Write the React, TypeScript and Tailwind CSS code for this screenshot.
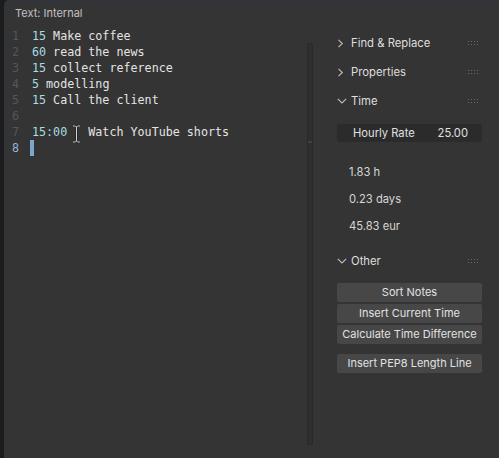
import React from 'react';

type Line = { num: string; head: string; rest: string };

const lines: Line[] = [
  { num: '1', head: '15', rest: ' Make coffee' },
  { num: '2', head: '60', rest: ' read the news' },
  { num: '3', head: '15', rest: ' collect reference' },
  { num: '4', head: '5', rest: ' modelling' },
  { num: '5', head: '15', rest: ' Call the client' },
  { num: '6', head: '', rest: '' },
  { num: '7', head: '15:00', rest: '   Watch YouTube shorts' },
];

function ChevronRight() {
  return (
    <svg width="7" height="9" viewBox="0 0 7 9" className="shrink-0">
      <path d="M1.5 0.8 L5.3 4.5 L1.5 8.2" fill="none" stroke="#bdbdbd" strokeWidth="1.1" />
    </svg>
  );
}

function ChevronDown() {
  return (
    <svg width="10" height="6" viewBox="0 0 10 6" className="shrink-0">
      <path d="M0.8 0.8 L5 5 L9.2 0.8" fill="none" stroke="#bdbdbd" strokeWidth="1.1" />
    </svg>
  );
}

function Grip() {
  return (
    <svg width="11" height="5" viewBox="0 0 11 5" className="ml-auto mr-[3px]">
      {[0, 3, 6, 9].map((x) => (
        <g key={x}>
          <rect x={x} y={0} width="1" height="1" fill="#6a6a6a" />
          <rect x={x} y={3} width="1" height="1" fill="#6a6a6a" />
        </g>
      ))}
    </svg>
  );
}

function PanelHeader({ title, open }: { title: string; open?: boolean }) {
  return (
    <div className="h-[20px] flex items-center pr-[17px]">
      <div className="w-[14px] flex items-center">{open ? <ChevronDown /> : <ChevronRight />}</div>
      <span className="text-[11.3px] text-[#dedede]">{title}</span>
      <Grip />
    </div>
  );
}

function Btn({ label }: { label: string }) {
  return (
    <div className="h-[19px] w-[145px] bg-[#474747] rounded-[2px] flex items-center justify-center text-[11px] text-[#e2e2e2]">
      {label}
    </div>
  );
}

export default function App() {
  return (
    <div className="w-[499px] h-[458px] bg-[#1c1c1c] flex font-['Inter',sans-serif] overflow-hidden">
      <div className="w-[4px] shrink-0" />
      <div className="flex-1 flex bg-[#343434] rounded-tl-[5px] border-l border-t border-[#2c3443]">
        {/* Editor */}
        <div className="w-[302px] shrink-0 flex flex-col">
          <div className="h-[24px] pl-[10px] flex items-center text-[11px] text-[#c2c2c2]">Text: Internal</div>
          <div className="mt-[3px] font-['DejaVu_Sans_Mono',monospace] text-[11.7px]">
            {lines.map((l) => (
              <div key={l.num} className="relative h-[16px] leading-[16px] flex whitespace-pre">
                <span className="w-[27px] pl-[7px] text-[#565656]">{l.num}</span>
                <span className="text-[#a9dbe3]">{l.head}</span>
                <span className="text-[#e4e4e4]">{l.rest}</span>
                {l.num === '7' && (
                  <svg width="9" height="18" viewBox="0 0 9 18" className="absolute left-[67px] top-[1px]">
                    <path d="M1 1 H3.5 L4.5 2 L5.5 1 H8 M4.5 2 V16 M1 17 H3.5 L4.5 16 L5.5 17 H8" fill="none" stroke="#1e1e1e" strokeWidth="2" />
                    <path d="M1 1 H3.5 L4.5 2 L5.5 1 H8 M4.5 2 V16 M1 17 H3.5 L4.5 16 L5.5 17 H8" fill="none" stroke="#cfcfcf" strokeWidth="1" />
                  </svg>
                )}
              </div>
            ))}
            <div className="h-[16px] leading-[16px] flex">
              <span className="w-[25px] pl-[7px] text-[#8fb6da]">8</span>
              <span className="w-[4px] h-[16px] bg-[#7ea6c8]" />
            </div>
          </div>
        </div>

        {/* Scrollbar */}
        <div className="w-[6px] shrink-0 pt-[42px] pb-[13px] flex">
          <div className="relative flex-1 bg-[#2e2e2e] border border-[#292929] rounded-[2px]">
            <div className="absolute left-0 right-0 top-[97px] h-[2px] bg-[#404040]" />
          </div>
        </div>

        {/* Sidebar */}
        <div className="flex-1 pl-[24px] pt-[32px] flex flex-col">
          <PanelHeader title="Find & Replace" />
          <div className="mt-[9px]">
            <PanelHeader title="Properties" />
          </div>
          <div className="mt-[9px]">
            <PanelHeader title="Time" open />
          </div>
          <div className="mt-[13px] h-[18px] w-[145px] bg-[#2b2b2b] rounded-[3px] flex items-center pl-[16px] pr-[14px] text-[11.2px] text-[#e0e0e0]">
            <span>Hourly Rate</span>
            <span className="ml-auto">25.00</span>
          </div>
          <div className="mt-[20px] pl-[12px] flex flex-col gap-[7px] text-[11.2px] text-[#d6d6d6]">
            <div className="h-[20px] flex items-center">1.83 h</div>
            <div className="h-[20px] flex items-center">0.23 days</div>
            <div className="h-[20px] flex items-center">45.83 eur</div>
          </div>
          <div className="mt-[15px]">
            <PanelHeader title="Other" open />
          </div>
          <div className="mt-[12px] flex flex-col gap-[2px]">
            <Btn label="Sort Notes" />
            <Btn label="Insert Current Time" />
            <Btn label="Calculate Time Difference" />
            <div className="mt-[8px]">
              <Btn label="Insert PEP8 Length Line" />
            </div>
          </div>
        </div>
      </div>
    </div>
  );
}
